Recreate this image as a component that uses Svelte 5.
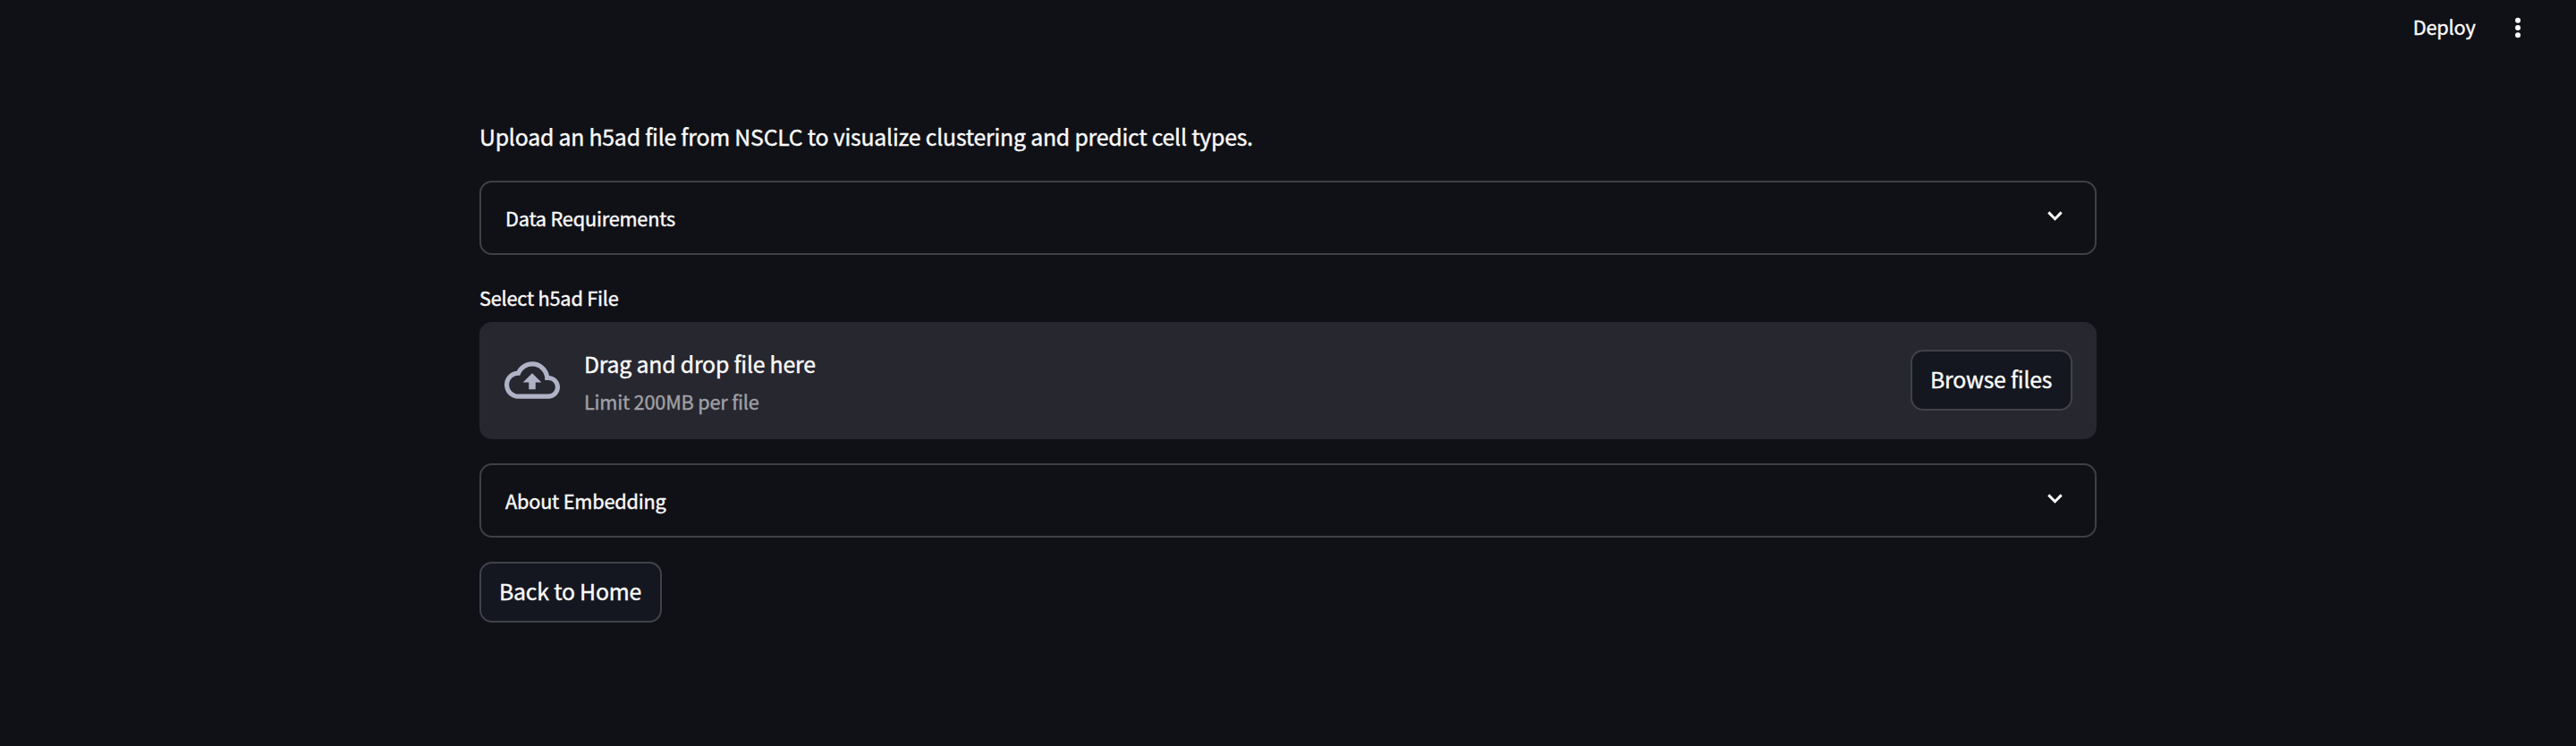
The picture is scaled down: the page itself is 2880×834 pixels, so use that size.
<script>
  const menuDots = [22.8, 31, 39.3];
</script>

{#snippet expander(label)}
  <button class="expander" type="button">
    <span class="small">{label}</span>
    <svg class="chevron" viewBox="0 0 17 11" aria-hidden="true">
      <path d="M1.3 1.4 8.5 8.7l7.2-7.3" />
    </svg>
  </button>
{/snippet}

<div class="app">
  <header>
    <button class="deploy small" type="button">Deploy</button>
    <svg class="menu" viewBox="0 0 10 62" aria-label="Menu">
      {#each menuDots as y}
        <circle cx="5" cy={y} r="3" />
      {/each}
    </svg>
  </header>

  <main>
    <p class="intro">Upload an h5ad file from NSCLC to visualize clustering and predict cell types.</p>

    {@render expander('Data Requirements')}

    <section class="uploader">
      <div class="label small">Select h5ad File</div>
      <div class="dropzone">
        <svg class="cloud" viewBox="0 0 24 24" aria-hidden="true">
          <path d="M19.35 10.04A7.49 7.49 0 0 0 12 4C9.11 4 6.6 5.64 5.35 8.04A5.994 5.994 0 0 0 0 14c0 3.31 2.69 6 6 6h13c2.76 0 5-2.24 5-5 0-2.64-2.05-4.78-4.65-4.96zM19 18H6c-2.21 0-4-1.79-4-4s1.79-4 4-4h.71C7.37 7.69 9.48 6 12 6a5.5 5.5 0 0 1 5.5 5.5v.5H19c1.66 0 3 1.34 3 3s-1.34 3-3 3zM8 13h2.55v3h2.9v-3H16l-4-4z" />
        </svg>
        <div class="hint">
          <span class="drag">Drag and drop file here</span>
          <span class="limit small">Limit 200MB per file</span>
        </div>
        <button class="btn browse" type="button">Browse files</button>
      </div>
    </section>

    {@render expander('About Embedding')}

    <button class="btn home" type="button">Back to Home</button>
  </main>
</div>

<style>
  :global(body) {
    margin: 0;
    background: #101116;
  }

  .app {
    height: 834px;
    overflow: hidden;
    background: #101116;
    color: #fafafa;
    font-family: 'Noto Sans CJK SC', 'Noto Sans', sans-serif;
    font-size: 24.8px;
    line-height: 40px;
    letter-spacing: -0.2px;
    font-variant-ligatures: common-ligatures;
    -webkit-text-stroke: 0.4px currentColor;
  }

  button {
    box-sizing: border-box;
    margin: 0;
    padding: 0;
    border: 0;
    background: none;
    color: inherit;
    font: inherit;
    letter-spacing: inherit;
    text-align: left;
    white-space: nowrap;
  }

  .small {
    font-size: 21.7px;
  }

  header {
    display: flex;
    justify-content: flex-end;
    align-items: center;
    height: 62px;
    padding-right: 60px;
    gap: 42.5px;
  }

  .deploy {
    padding-bottom: 2px;
  }

  .menu {
    width: 10px;
    height: 62px;
    fill: #fafafa;
  }

  main {
    display: flex;
    flex-direction: column;
    align-items: stretch;
    width: 1808px;
    margin: 0 auto;
    padding-top: 70px;
  }

  .intro {
    height: 40px;
    margin: 0 0 30px;
    white-space: nowrap;
  }

  .expander {
    display: flex;
    flex: none;
    align-items: center;
    justify-content: space-between;
    height: 83px;
    padding: 0 36px 0 27px;
    border: 2px solid #3f4043;
    border-radius: 14px;
  }

  .chevron {
    width: 17px;
    height: 11px;
    margin: 0 0.5px 5px 0;
    fill: none;
    stroke: #fafafa;
    stroke-width: 3;
  }

  .uploader {
    padding: 28px 0 27px;
  }

  .label {
    height: 47px;
  }

  .dropzone {
    display: flex;
    align-items: center;
    box-sizing: border-box;
    height: 131px;
    padding: 0 27px 0 28px;
    border-radius: 14px;
    background: #272730;
  }

  .cloud {
    width: 62px;
    height: 62px;
    margin-bottom: 1px;
    fill: #b0b3c6;
  }

  .hint {
    display: flex;
    flex-direction: column;
    gap: 3px;
    margin: 3px auto 0 27px;
  }

  .limit {
    color: #a0a0a4;
  }

  .btn {
    height: 68px;
    padding: 0 22px 5px 20px;
    border: 2px solid #414249;
    border-radius: 14px;
    background: #14171f;
    text-align: center;
  }

  .browse {
    width: 181px;
    margin-bottom: 1px;
  }

  .home {
    width: 204px;
    margin-top: 27px;
  }
</style>
